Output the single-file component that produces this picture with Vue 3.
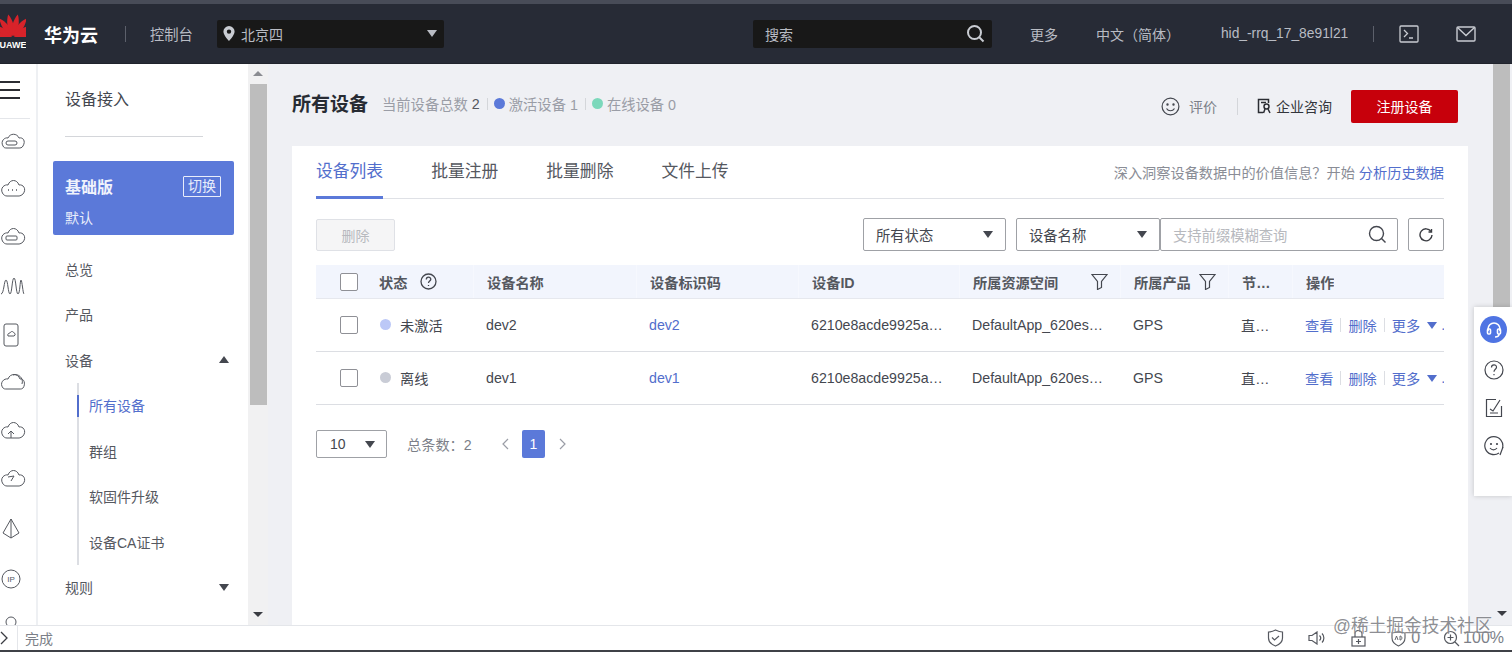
<script setup>
const petals = [-84, -60, -36, -12, 12, 36, 60, 84]

const menuTop = [
  { label: '总览' },
  { label: '产品' },
  { label: '设备', caret: 'up' },
]
const subMenu = ['所有设备', '群组', '软固件升级', '设备CA证书']

const tabs = ['设备列表', '批量注册', '批量删除', '文件上传']

const columns = ['设备名称', '设备标识码', '设备ID', '所属资源空间', '所属产品', '节点类型', '操作']

const rows = [
  { state: '未激活', color: '#bcc8f7', name: 'dev2', code: 'dev2' },
  { state: '离线', color: '#c9ccd6', name: 'dev1', code: 'dev1' },
]
</script>

<template>
  <div class="app">
    <div class="strip"></div>
    <header class="topbar">
      <div class="logo">
        <svg width="26" height="24" viewBox="-13 -24 26 24">
          <path
            v-for="a in petals"
            :key="a"
            d="M0 -1C-4.5 -8 -3.4 -17 0 -23C3.4 -17 4.5 -8 0 -1Z"
            fill="#d8232a"
            :transform="`rotate(${a})`"
          />
        </svg>
        <span class="logo-text">HUAWEI</span>
      </div>
      <span class="brand">华为云</span>
      <i class="top-sep"></i>
      <span class="console">控制台</span>
      <div class="region">
        <svg width="12" height="15" viewBox="0 0 12 15"><path d="M6 0a5.6 5.6 0 0 0-5.6 5.6C.4 9.5 6 15 6 15s5.6-5.500 5.600-9.400A5.600 5.600 0 0 0 6 0zm0 7.800a2.200 2.200 0 1 1 0-4.400 2.200 2.200 0 0 1 0 4.400z" fill="#c9ccd2"/></svg>
        <span>北京四</span>
        <i class="caret down light"></i>
      </div>
      <div class="search">
        <span>搜索</span>
        <svg width="19" height="19" viewBox="0 0 19 19" fill="none" stroke="#c9ccd2" stroke-width="2"><circle cx="8.500" cy="8.500" r="6.500"/><path d="M13 13l4.500 4.500"/></svg>
      </div>
      <span class="top-link more">更多</span>
      <span class="top-link lang">中文（简体）</span>
      <span class="top-link user">hid_-rrq_17_8e91l21</span>
      <i class="top-sep user-sep"></i>
      <svg class="term" width="20" height="18" viewBox="0 0 20 18" fill="none" stroke="#c9ccd2" stroke-width="1.300"><rect x="1" y="1" width="18" height="16" rx="1"/><path d="M5 5l3.500 3.500L5 12M10 13h4"/></svg>
      <svg class="mail" width="20" height="16" viewBox="0 0 20 16" fill="none" stroke="#c9ccd2" stroke-width="1.400"><rect x="1" y="1" width="18" height="14" rx="1"/><path d="M1.500 1.500L10 9.500l8.500-8"/></svg>
    </header>

    <div class="body">
      <nav class="rail">
        <div class="burger"><i></i><i></i><i></i></div>
        <svg class="rail-icons" width="30" height="508" viewBox="0 0 30 508" fill="none" stroke="#55585f" stroke-width="1">
          <path d="M3 27c-3-5 2-9 5-8 2-5 9-5 11 0 4-1 7 3 4 8-1 2-3 2-4 2H7c-2 0-3 0-4-2z"/>
          <rect x="6" y="22" width="11" height="4" rx="2"/>
          <path d="M3 75c-4-6 2-10 5-9 2-6 9-6 11 0 4-1 8 4 4 9-1 1-3 2-4 2H7c-2 0-3-1-4-2z"/>
          <path d="M8 71h1M12 71h1M16 71h1" stroke-width="1.500"/>
          <path d="M3 123c-4-6 2-10 5-9 2-6 9-6 11 0 4-1 8 4 4 9-1 1-3 2-4 2H7c-2 0-3-1-4-2z"/>
          <rect x="6" y="117" width="11" height="4" rx="1"/>
          <path d="M1 175c3 0 3-14 5-14s2 14 4 14 2-16 4-16 2 16 4 16 2-14 3-14 2 14 3 14"/>
          <rect x="4" y="205" width="14" height="22" rx="2"/>
          <path d="M8 217c-1-2 1-3 2-3 1-2 3-2 4 0 1 0 2 2 0 3z"/>
          <path d="M3 269c-4-5 1-10 5-9 2-6 10-6 12 0 4-1 6 5 3 9-1 1-2 1-3 1H6c-1 0-2 0-3-1z"/>
          <path d="M13 256c5-2 11 3 9 9"/>
          <path d="M3 317c-4-6 2-10 5-9 2-6 9-6 11 0 4-1 8 4 4 9-1 1-3 2-4 2H7c-2 0-3-1-4-2z"/>
          <path d="M11 319v-7M8 315l3-3 3 3"/>
          <path d="M3 365c-4-6 2-10 5-9 2-6 9-6 11 0 4-1 8 4 4 9-1 1-3 2-4 2H7c-2 0-3-1-4-2z"/>
          <path d="M8 358l6-1-3 5"/>
          <path d="M11 400l-8 14 8 5 8-5zM11 400v19"/>
          <circle cx="11" cy="460" r="9"/>
          <text x="11" y="463" font-size="8" text-anchor="middle" stroke="none" fill="#55585f" font-family="Liberation Sans, sans-serif">IP</text>
          <circle cx="11" cy="503" r="5"/>
          <path d="M3 514c1-5 4-7 8-7s7 2 8 7"/>
        </svg>
      </nav>

      <aside class="side">
        <h2 class="side-title">设备接入</h2>
        <div class="side-line"></div>
        <div class="plan">
          <div class="plan-top"><span class="plan-name">基础版</span><span class="plan-switch">切换</span></div>
          <div class="plan-sub">默认</div>
        </div>
        <div v-for="m in menuTop" :key="m.label" class="menu-item">
          <span>{{ m.label }}</span>
          <i v-if="m.caret" class="caret up"></i>
        </div>
        <div class="sub-menu">
          <div v-for="(s, i) in subMenu" :key="s" class="sub-item" :class="{ active: i === 0 }">{{ s }}</div>
        </div>
        <div class="menu-item"><span>规则</span><i class="caret down"></i></div>
      </aside>

      <div class="scroll side-scroll">
        <i class="arrow-up"></i>
        <div class="thumb"></div>
        <i class="arrow-down"></i>
      </div>

      <main class="main">
        <div class="page-head">
          <h1>所有设备</h1>
          <span class="stat">当前设备总数 <b>2</b></span>
          <i class="stat-sep"></i>
          <span class="stat"><i class="dot blue"></i>激活设备 1</span>
          <i class="stat-sep"></i>
          <span class="stat"><i class="dot green"></i>在线设备 0</span>
          <div class="head-right">
            <svg width="19" height="19" viewBox="0 0 19 19" fill="none" stroke="#44474f" stroke-width="1.200"><circle cx="9.500" cy="9.500" r="8.400"/><path d="M5.500 11.500c2 3 6 3 8 0"/><circle cx="6.500" cy="7.500" r=".6"/><circle cx="12.500" cy="7.500" r=".6"/></svg>
            <span class="rate">评价</span>
            <i class="head-sep"></i>
            <svg width="15" height="16" viewBox="0 0 15 16" fill="none" stroke="#2b2d33" stroke-width="1.500"><path d="M6 14.500H1.500v-13h10V5M4 4.500h5"/><circle cx="9.500" cy="8.500" r="2.500"/><path d="M8 11l-1.500 4M11 11l2 4"/></svg>
            <span class="consult">企业咨询</span>
            <button class="btn-register">注册设备</button>
          </div>
        </div>

        <section class="card">
          <div class="tabs">
            <span v-for="(t, i) in tabs" :key="t" class="tab" :class="{ active: i === 0 }">{{ t }}</span>
            <span class="tab-tip">深入洞察设备数据中的价值信息？开始 <a>分析历史数据</a></span>
          </div>

          <div class="toolbar">
            <button class="btn-del">删除</button>
            <div class="filters">
              <div class="select sel-status"><span>所有状态</span><i class="caret down"></i></div>
              <div class="select sel-name"><span>设备名称</span><i class="caret down"></i></div>
              <div class="query">
                <span>支持前缀模糊查询</span>
                <svg width="19" height="19" viewBox="0 0 19 19" fill="none" stroke="#44474f" stroke-width="1.400"><circle cx="8.500" cy="8.500" r="7"/><path d="M13.500 13.500l4 4"/></svg>
              </div>
              <button class="btn-refresh">
                <svg width="14" height="14" viewBox="0 0 14 14" fill="none" stroke="#3a3c42" stroke-width="1.400"><path d="M12 3.500A6 6 0 1 0 13 7"/><path d="M12.500 1v3h-3" /></svg>
              </button>
            </div>
          </div>

          <div class="grid head">
            <div class="cell first">
              <i class="check"></i>
              <span class="th">状态</span>
              <svg class="help" width="17" height="17" viewBox="0 0 17 17" fill="none" stroke="#44474f" stroke-width="1.300"><circle cx="8.500" cy="8.500" r="7.500"/><path d="M6.300 6.500c0-3 4.500-3 4.500-.2 0 1.800-2.300 1.800-2.300 3.700M8.500 12v1"/></svg>
            </div>
            <div v-for="(c, i) in columns" :key="c" class="cell">
              <span class="th ellip">{{ c }}</span>
              <svg v-if="i === 3 || i === 4" class="funnel" width="17" height="17" viewBox="0 0 17 17" fill="none" stroke="#44474f" stroke-width="1.200"><path d="M1 1.500h15l-5.500 7v6l-4 2v-8z"/></svg>
            </div>
          </div>

          <div v-for="r in rows" :key="r.name" class="grid row">
            <div class="cell first">
              <i class="check"></i>
              <i class="state-dot" :style="{ background: r.color }"></i>
              <span>{{ r.state }}</span>
            </div>
            <div class="cell">{{ r.name }}</div>
            <div class="cell"><a>{{ r.code }}</a></div>
            <div class="cell"><span class="ellip">6210e8acde9925a7d1f08c2e</span></div>
            <div class="cell"><span class="ellip">DefaultApp_620esh_iot_01</span></div>
            <div class="cell">GPS</div>
            <div class="cell"><span class="ellip">直连设备</span></div>
            <div class="cell ops">
              <a>查看</a><i class="op-sep"></i><a>删除</a><i class="op-sep"></i><a>更多</a><i class="caret down small"></i><span class="dots">..</span>
            </div>
          </div>

          <div class="pager">
            <div class="select page-size"><span>10</span><i class="caret down"></i></div>
            <span class="total">总条数：2</span>
            <svg class="chev" width="8" height="12" viewBox="0 0 8 12" fill="none" stroke="#9a9da6" stroke-width="1.200"><path d="M7 1L2 6l5 5"/></svg>
            <span class="page-num">1</span>
            <svg class="chev" width="8" height="12" viewBox="0 0 8 12" fill="none" stroke="#9a9da6" stroke-width="1.200"><path d="M1 1l5 5-5 5"/></svg>
          </div>
        </section>
      </main>

      <div class="scroll main-scroll">
        <div class="thumb"></div>
        <i class="arrow-down"></i>
      </div>

      <div class="float-panel">
        <span class="support">
          <svg width="18" height="18" viewBox="0 0 18 18" fill="none" stroke="#fff" stroke-width="1.600"><path d="M3 10V8a6 6 0 0 1 12 0v2"/><rect x="2.500" y="8" width="3" height="5" rx="1"/><rect x="12.500" y="8" width="3" height="5" rx="1"/><path d="M14 13c0 2-2 3-4 3"/></svg>
        </span>
        <svg width="20" height="20" viewBox="0 0 20 20" fill="none" stroke="#44474f" stroke-width="1.200"><circle cx="10" cy="10" r="9"/><path d="M7.500 7.500c0-3.500 5-3.500 5-.3 0 2-2.500 2.200-2.500 4.500M10 14v1.200"/></svg>
        <svg width="18" height="20" viewBox="0 0 18 20" fill="none" stroke="#44474f" stroke-width="1.200"><path d="M11 1.500H1.500v17h15V8M5 11l3 2 7-11M5 15h8"/></svg>
        <svg width="20" height="20" viewBox="0 0 20 20" fill="none" stroke="#44474f" stroke-width="1.200"><path d="M15 17a9 9 0 1 1 3.500-5"/><path d="M6 12c2 2.500 5 2.500 7 0M19 11l-3 8"/><circle cx="7" cy="8" r=".5"/><circle cx="13" cy="8" r=".5"/></svg>
      </div>
    </div>

    <footer class="status">
      <svg class="st-chev" width="8" height="14" viewBox="0 0 8 14" fill="none" stroke="#3a3c42" stroke-width="1.300"><path d="M1 1l6 6-6 6"/></svg>
      <i class="st-sep"></i>
      <span class="st-done">完成</span>
      <div class="st-right">
        <svg width="17" height="18" viewBox="0 0 17 18" fill="none" stroke="#55585f" stroke-width="1.200"><path d="M1.500 3c3 0 5-1 7-2 2 1 4 2 7 2v6c0 4-3 6.500-7 8-4-1.500-7-4-7-8z"/><path d="M5 8.500l2.500 2.500L12 7"/></svg>
        <svg width="17" height="14" viewBox="0 0 17 14" fill="none" stroke="#55585f" stroke-width="1.200"><path d="M1 4.500h3L9 1v12L4 9.500H1zM11.500 4.500c1.500 1.500 1.500 3.500 0 5M14 2.500c2.500 2.500 2.500 6.500 0 9"/></svg>
        <svg width="15" height="17" viewBox="0 0 15 17" fill="none" stroke="#55585f" stroke-width="1.200"><rect x="1" y="7" width="13" height="9"/><path d="M4 7V4a3.500 3.500 0 0 1 7 0v3M5 11.500h5M7.500 9v5"/></svg>
        <span class="st-ad">
          <svg width="15" height="17" viewBox="0 0 15 17" fill="none" stroke="#55585f" stroke-width="1.100"><path d="M1 3c2.500 0 4.500-1 6.500-2 2 1 4 2 6.500 2v5c0 4-3 6.500-6.500 8C4 14.500 1 12 1 8z"/><path d="M4 10l1.500-4L7 10M9 6v4c2.500 0 2.500-4 0-4z" stroke-width=".9"/></svg>
          <span>0</span>
        </span>
        <span class="st-zoom">
          <svg width="17" height="17" viewBox="0 0 17 17" fill="none" stroke="#55585f" stroke-width="1.200"><circle cx="7.500" cy="7.500" r="6"/><path d="M12 12l4 4M4.500 7.500h6M7.500 4.500v6"/></svg>
          <span>100%</span>
        </span>
      </div>
    </footer>
    <div class="watermark">@稀土掘金技术社区</div>
  </div>
</template>

<style>
html, body { margin: 0; padding: 0; overflow: hidden; }
</style>

<style scoped>
.app { position: relative; width: 1512px; height: 652px; display: flex; flex-direction: column; overflow: hidden; font-family: "Liberation Sans", "Noto Sans CJK SC", sans-serif; font-size: 14px; color: #55585f; background: #fff; }
i { display: block; font-style: normal; }
h1, h2 { margin: 0; }
a { color: #526ecc; }
button { font-family: inherit; }

.strip { height: 4px; background: #484c58; flex: none; }
.topbar { height: 60px; flex: none; display: flex; align-items: center; background: #272b36; border-bottom: 1px solid #20232c; box-sizing: border-box; color: #b9bcc4; }
.logo { width: 26px; height: 40px; margin-top: -2px; display: flex; flex-direction: column; align-items: center; overflow: hidden; flex: none; }
.logo-text { color: #fff; font-size: 9px; font-weight: 700; line-height: 11px; margin-top: 3px; margin-left: -4px; white-space: nowrap; }
.brand { margin-left: 18px; color: #fff; font-size: 18px; font-weight: 700; }
.top-sep { width: 1px; height: 16px; background: #5c606b; margin-left: 27px; }
.console { margin-left: 24px; margin-right: 24px; font-size: 14.300px; }
.region { width: 227px; height: 28px; box-sizing: border-box; display: flex; align-items: center; background: #181818; border-radius: 2px; padding: 0 7px 0 6px; gap: 6px; }
.region .caret { margin-left: auto; }
.search { width: 239px; height: 28px; box-sizing: border-box; margin-left: 309px; display: flex; align-items: center; justify-content: space-between; background: #181818; padding: 0 7px 0 12px; border-radius: 2px; }
.top-link { white-space: nowrap; }
.more { margin-left: 38px; }
.lang { margin-left: 38px; width: 84px; white-space: nowrap; }
.user { margin-left: 41px; font-size: 13.800px; }
.user-sep { margin-left: 25px; }
.term { margin-left: 25px; }
.mail { margin-left: 37px; }

.caret { width: 0; height: 0; border-left: 5px solid transparent; border-right: 5px solid transparent; flex: none; }
.caret.down { border-top: 7px solid #44474f; }
.caret.up { border-bottom: 7px solid #44474f; }
.caret.light { border-top-color: #b9bcc4; }
.caret.small { border-left-width: 5px; border-right-width: 5px; border-top: 7px solid #526ecc; margin-left: 7px; }

.body { position: relative; flex: 1; display: flex; min-height: 0; overflow: hidden; }
.rail { width: 38px; flex: none; box-sizing: border-box; border-right: 2px solid #eef0f3; background: #fff; overflow: hidden; }
.burger { height: 55px; border-bottom: 1px solid #e4e6ea; width: 30px; box-sizing: border-box; padding-top: 17px; }
.burger i { width: 20px; height: 2px; background: #2b2d33; margin-bottom: 6px; }
.rail-icons { display: block; margin-top: 0; }

.side { width: 210px; flex: none; box-sizing: border-box; padding: 0 14px 0 15px; background: #fff; overflow: hidden; }
.side-title { font-size: 16px; font-weight: 400; color: #44474f; margin: 26px 0 0 12px; line-height: 20px; }
.side-line { height: 1px; background: #d4d6da; margin: 26px 31px 0 12px; }
.plan { margin-top: 24px; width: 181px; height: 74px; box-sizing: border-box; background: #5b79d9; border-radius: 2px; padding: 13px 13px 0 12px; color: #e8edfb; }
.plan-top { display: flex; justify-content: space-between; align-items: center; }
.plan-name { font-size: 16px; font-weight: 700; color: #f0f3fc; }
.plan-switch { border: 1px solid #e8edfb; padding: 0 4px; font-size: 14px; line-height: 19px; border-radius: 1px; }
.plan-sub { margin-top: 9px; }
.menu-item { height: 45.500px; display: flex; align-items: center; justify-content: space-between; padding: 0 5px 0 12px; color: #55585f; }
.plan + .menu-item { margin-top: 11px; }
.sub-menu { margin-left: 24px; width: 170px; border-left: 2px solid #dcdee3; }
.sub-item { height: 45.500px; display: flex; align-items: center; padding-left: 10px; margin-left: -2px; border-left: 2px solid transparent; position: relative; }
.sub-item.active { color: #526ecc; }
.sub-item.active::before { content: ""; position: absolute; left: -2px; top: 12px; height: 22px; width: 2px; background: #526ecc; }

.scroll { flex: none; background: #f1f1f2; position: relative; }
.side-scroll { width: 20px; }
.side-scroll .thumb { position: absolute; left: 2px; top: 20px; width: 17px; height: 321px; background: #bdbdbd; }
.arrow-up, .arrow-down { position: absolute; width: 0; height: 0; border-left: 5px solid transparent; border-right: 5px solid transparent; left: 5px; }
.arrow-up { top: 7px; border-bottom: 5px solid #8a8c91; }
.arrow-down { bottom: 8px; border-top: 5px solid #3a3c42; }
.main-scroll { width: 19px; background: #eff0f4; }
.main-scroll .thumb { width: 17px; height: 245px; background: #bdbdbd; }
.main-scroll .arrow-down { left: 4px; bottom: 9px; }

.main { flex: 1; min-width: 0; display: flex; flex-direction: column; padding: 0 25px 0 24px; background: #eff0f4; }
.page-head { height: 82px; flex: none; display: flex; align-items: center; padding-top: 0; box-sizing: border-box; margin-bottom: 0; }
.page-head h1 { font-size: 19px; font-weight: 700; color: #272b33; margin-right: 14px; margin-top: -5px; }
.stat { display: flex; align-items: center; color: #9a9da6; font-size: 14.300px; gap: 4px; margin-top: -3px; }
.stat b { font-weight: 400; color: #55585f; }
.stat-sep { width: 1px; height: 12px; background: #d4d6da; margin: -3px 6px 0 7px; }
.dot { width: 11px; height: 11px; border-radius: 50%; }
.dot.blue { background: #5b79d9; }
.dot.green { background: #7cd8bb; }
.head-right { margin-left: auto; display: flex; align-items: center; margin-top: 2px; }
.rate { margin-left: 9px; color: #7c7f88; }
.head-sep { width: 1px; height: 17px; background: #d4d6da; margin: 0 19px 0 20px; }
.consult { margin-left: 4px; color: #33353b; }
.btn-register { margin-left: 19px; margin-right: 10px; width: 107px; height: 33px; border: none; border-radius: 2px; background: #c7000b; color: #fff; font-size: 14px; }

.card { flex: 1; min-height: 0; background: #fff; padding: 0 24px; }
.tabs { height: 53px; display: flex; align-items: center; border-bottom: 1px solid #dfe1e6; box-sizing: border-box; gap: 48px; position: relative; }
.tab { font-size: 16.800px; color: #55585f; line-height: 52px; height: 53px; box-sizing: border-box; }
.tab.active { color: #526ecc; border-bottom: 3px solid #5b79d9; }
.tab-tip { margin-left: auto; color: #8a8d96; font-size: 14.200px; }
.toolbar { display: flex; justify-content: space-between; align-items: center; margin-top: 19px; height: 33px; }
.btn-del { width: 79px; height: 32px; background: #f5f5f6; border: 1px solid #dfe1e6; border-radius: 2px; color: #b7b9be; font-size: 14px; }
.filters { display: flex; align-items: center; }
.select { display: flex; align-items: center; justify-content: space-between; box-sizing: border-box; border: 1px solid #9fa1a6; border-radius: 2px; background: #fff; color: #44474f; }
.sel-status, .sel-name { height: 33px; padding: 0 12px; font-size: 14.300px; }
.sel-status { width: 143px; margin-right: 10px; }
.sel-name { width: 144px; }
.query { width: 238px; height: 33px; box-sizing: border-box; border: 1px solid #9fa1a6; border-left-color: #9fa1a6; margin-left: 0; border-radius: 2px; display: flex; align-items: center; justify-content: space-between; padding: 0 10px 0 12px; color: #b7b9be; font-size: 14.300px; }
.btn-refresh { margin-left: 10px; width: 36px; height: 33px; padding: 0; display: flex; align-items: center; justify-content: center; background: #fff; border: 1px solid #9fa1a6; border-radius: 2px; }

.grid { display: grid; grid-template-columns: 157px 163px 162px 161px 161px 108px 64px 152px; }
.head { margin-top: 14px; height: 34px; background: #f2f5fd; border-bottom: 1px solid #e6e8ee; box-sizing: border-box; }
.row { height: 53px; border-bottom: 1px solid #dcdee3; box-sizing: border-box; color: #44474f; }
.cell { display: flex; align-items: center; min-width: 0; padding: 0 14px 0 13px; white-space: nowrap; box-sizing: border-box; font-size: 14.200px; }
.head .cell + .cell { border-left: 1px solid #f6f8fe; }
.th { font-weight: 700; color: #55585f; }
.ellip { display: block; overflow: hidden; text-overflow: ellipsis; white-space: nowrap; min-width: 0; }
.first { padding-left: 24px; padding-right: 0; }
.check { width: 18px; height: 18px; flex: none; box-sizing: border-box; border: 1px solid #8f9096; border-radius: 2px; background: #fff; margin-right: 21px; }
.help { margin-left: 13px; flex: none; }
.funnel { margin-left: auto; margin-right: -2px; flex: none; }
.state-dot { width: 11px; height: 11px; border-radius: 50%; margin: -2px 9px 0 1px; flex: none; }
.ops { padding-right: 0; overflow: hidden; }
.ops a { flex: none; }
.op-sep { width: 1px; height: 14px; background: #dcdee3; margin: 0 7px; flex: none; }
.dots { color: #526ecc; margin-left: 4px; }

.pager { display: flex; align-items: center; margin-top: 25px; }
.page-size { width: 71px; height: 28px; padding: 0 11px 0 13px; }
.total { margin-left: 20px; color: #7c7f88; font-size: 14.200px; width: 80px; }
.chev { margin-left: 14px; }
.page-num { margin-left: 13px; width: 23px; height: 28px; background: #5b79d9; color: #fff; display: flex; align-items: center; justify-content: center; border-radius: 2px; }
.page-num + .chev { margin-left: 14px; }

.float-panel { position: absolute; left: 1474px; top: 243px; width: 38px; height: 189px; box-sizing: border-box; background: #fff; box-shadow: 0 0 5px rgba(0, 0, 0, 0.18); display: flex; flex-direction: column; align-items: center; padding: 9px 0 0 1px; gap: 18px; }
.support { width: 27px; height: 27px; border-radius: 50%; background: #4f74e3; display: flex; align-items: center; justify-content: center; margin-bottom: -1px; }

.status { height: 27px; flex: none; display: flex; align-items: center; background: #fff; border-top: 1px solid #e4e6ea; border-bottom: 2px solid #3f4147; box-sizing: border-box; }
.st-chev { margin-left: 0; flex: none; }
.st-sep { width: 1px; height: 24px; background: #e4e6ea; margin-left: 9px; }
.st-done { margin-left: 7px; color: #7c7f88; }
.st-right { margin-left: auto; display: flex; align-items: center; color: #7c7f88; font-size: 16px; padding-right: 8px; }
.st-right > svg:nth-child(2) { margin-left: 24px; }
.st-right > svg:nth-child(3) { margin-left: 26px; }
.st-ad { margin-left: 25px; display: flex; align-items: center; gap: 5px; }
.st-zoom { margin-left: 23px; display: flex; align-items: center; gap: 3px; }

.watermark { position: absolute; left: 1333px; top: 611px; font-size: 17.700px; color: rgba(120, 122, 128, 0.85); white-space: nowrap; text-shadow: 0 0 2px rgba(255, 255, 255, 0.8); }
</style>
